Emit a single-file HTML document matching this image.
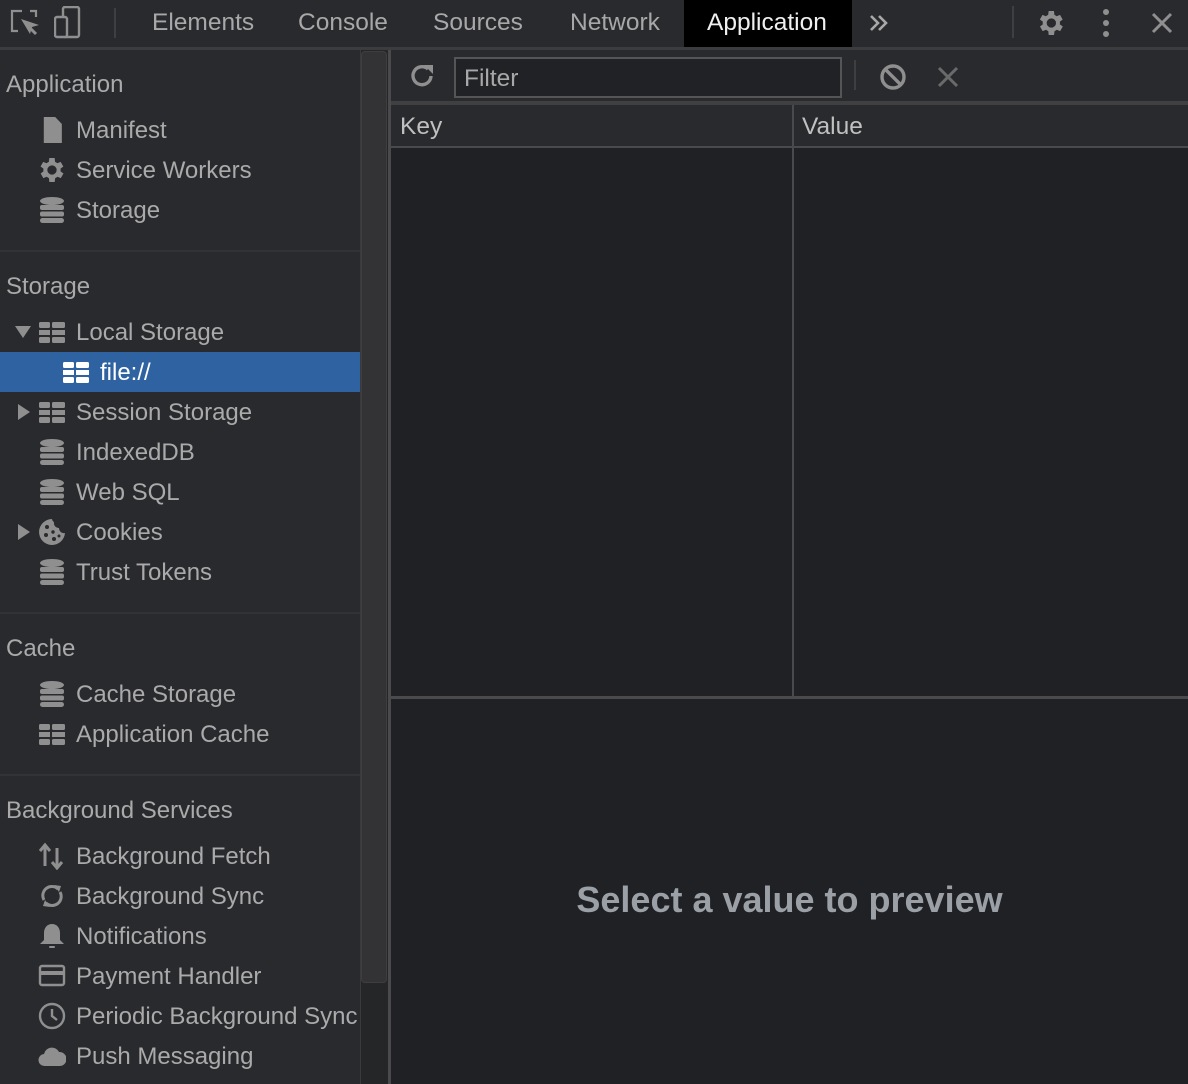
<!DOCTYPE html>
<html><head><meta charset="utf-8"><style>
*{margin:0;padding:0;box-sizing:border-box}
body{width:1188px;height:1084px;background:#292a2d;font-family:"Liberation Sans",Arial,sans-serif;color:#b1b1b1;position:relative;overflow:hidden}
.a{position:absolute}
.t{font-size:24.5px;white-space:nowrap}
.row{position:absolute;left:0;width:360px;height:40px;line-height:42px;font-size:24px;color:#aaa;white-space:nowrap;overflow:hidden}
.row .lbl{position:absolute;left:76px}
.row svg{position:absolute;left:38px;top:6px}
.hd{position:absolute;left:6px;font-size:24px;color:#aaa;line-height:42px;height:40px}
.sep{position:absolute;left:0;width:360px;height:2px;background:#323336}
</style></head><body>
<div class="a" style="left:0;top:0;width:1188px;height:47px;background:#292a2d"></div>
<div class="a" style="left:0;top:47px;width:1188px;height:3px;background:#3c3c3e"></div>
<svg class="a" style="left:8px;top:6px" width="34" height="34" viewBox="0 0 34 34"><path d="M14 5H4v20h6" fill="none" stroke="#8f8f8f" stroke-width="2.2"/><path d="M22 5h6v6" fill="none" stroke="#8f8f8f" stroke-width="2.2"/><path d="M13 13l18 6-7 2-2 7z" fill="#8f8f8f"/><path d="M22 22l6 6" stroke="#8f8f8f" stroke-width="3"/></svg>
<svg class="a" style="left:54px;top:6px" width="40" height="34" viewBox="0 0 40 34"><rect x="9" y="1" width="16" height="30" rx="2" fill="none" stroke="#8f8f8f" stroke-width="2.4"/><rect x="1" y="11" width="12" height="20" rx="2" fill="#292a2d" stroke="#8f8f8f" stroke-width="2.4"/></svg>
<div class="a" style="left:114px;top:8px;width:2px;height:30px;background:#3f3f42"></div>
<div class="a t" style="left:152px;top:9px;color:#a8a8a8">Elements</div>
<div class="a t" style="left:298px;top:9px;color:#a8a8a8">Console</div>
<div class="a t" style="left:433px;top:9px;color:#a8a8a8">Sources</div>
<div class="a t" style="left:570px;top:9px;color:#a8a8a8">Network</div>
<div class="a" style="left:684px;top:0;width:168px;height:47px;background:#000"></div>
<div class="a t" style="left:707px;top:9px;color:#f0f0f0">Application</div>
<svg class="a" style="left:869px;top:13px" width="20" height="20"><path d="M2 3l7 7-7 7M10 3l7 7-7 7" fill="none" stroke="#a8a8a8" stroke-width="2.6"/></svg>
<div class="a" style="left:1012px;top:6px;width:2px;height:32px;background:#3f3f42"></div>
<svg class="a" style="left:1034px;top:7px" width="32" height="32" viewBox="0 0 24 24"><path fill="#8f8f8f" d="M19.4 13a7.5 7.5 0 000-2l2.1-1.6-2-3.5-2.5 1a7 7 0 00-1.7-1L15 3h-4l-.4 2.9a7 7 0 00-1.7 1l-2.5-1-2 3.5L6.6 11a7.5 7.5 0 000 2l-2.1 1.6 2 3.5 2.5-1a7 7 0 001.7 1L11 21h4l.4-2.9a7 7 0 001.7-1l2.5 1 2-3.5zM13 15.5a3.5 3.5 0 110-7 3.5 3.5 0 010 7z"/></svg>
<svg class="a" style="left:1098px;top:8px" width="16" height="30"><circle cx="8" cy="4" r="3" fill="#8f8f8f"/><circle cx="8" cy="15" r="3" fill="#8f8f8f"/><circle cx="8" cy="26" r="3" fill="#8f8f8f"/></svg>
<svg class="a" style="left:1150px;top:11px" width="24" height="24"><path d="M3 3l18 18M21 3L3 21" stroke="#8f8f8f" stroke-width="3"/></svg>

<div class="hd" style="top:64px">Application</div>
<div class="row" style="top:110px"><svg width="28" height="28" viewBox="0 0 28 28"><path d="M4 1h12l7 7v19H4z" fill="#8f8f8f" transform="translate(2 0) scale(0.95 1)"/></svg><span class="lbl">Manifest</span></div>
<div class="row" style="top:150px"><svg style="left:36px;top:4px" width="32" height="32" viewBox="0 0 24 24"><path fill="#8f8f8f" d="M19.4 13a7.5 7.5 0 000-2l2.1-1.6-2-3.5-2.5 1a7 7 0 00-1.7-1L15 3h-4l-.4 2.9a7 7 0 00-1.7 1l-2.5-1-2 3.5L6.6 11a7.5 7.5 0 000 2l-2.1 1.6 2 3.5 2.5-1a7 7 0 001.7 1L11 21h4l.4-2.9a7 7 0 001.7-1l2.5 1 2-3.5zM13 15.5a3.5 3.5 0 110-7 3.5 3.5 0 010 7z" transform="translate(-1 0)"/></svg><span class="lbl">Service Workers</span></div>
<div class="row" style="top:190px"><svg width="28" height="28" viewBox="0 0 28 28"><g fill="#8f8f8f"><ellipse cx="14" cy="5" rx="12" ry="4"/><rect x="2" y="9" width="24" height="5" rx="2"/><rect x="2" y="15.5" width="24" height="5" rx="2"/><rect x="2" y="22" width="24" height="5" rx="2.5"/></g></svg><span class="lbl">Storage</span></div>
<div class="sep" style="top:250px"></div>
<div class="hd" style="top:266px">Storage</div>
<svg class="a" style="left:15px;top:326px" width="16" height="12"><path d="M0 0h16L8 12z" fill="#8f8f8f"/></svg>
<div class="row" style="top:312px"><svg width="28" height="28" viewBox="0 0 28 28"><g fill="#8f8f8f"><rect x="1" y="4" width="11" height="6" rx="1.5"/><rect x="14" y="4" width="13" height="6" rx="1.5"/><rect x="1" y="12" width="11" height="5"/><rect x="14" y="12" width="13" height="5"/><rect x="1" y="19" width="11" height="6" rx="1.5"/><rect x="14" y="19" width="13" height="6" rx="1.5"/></g></svg><span class="lbl">Local Storage</span></div>
<div class="a" style="left:0;top:352px;width:360px;height:40px;background:#2e62a0"></div>
<div class="row" style="top:352px;color:#fff"><svg style="left:62px" width="28" height="28" viewBox="0 0 28 28"><g fill="#fff"><rect x="1" y="4" width="11" height="6" rx="1.5"/><rect x="14" y="4" width="13" height="6" rx="1.5"/><rect x="1" y="12" width="11" height="5"/><rect x="14" y="12" width="13" height="5"/><rect x="1" y="19" width="11" height="6" rx="1.5"/><rect x="14" y="19" width="13" height="6" rx="1.5"/></g></svg><span class="lbl" style="left:100px">file://</span></div>
<svg class="a" style="left:18px;top:404px" width="12" height="16"><path d="M0 0v16l12-8z" fill="#8f8f8f"/></svg>
<div class="row" style="top:392px"><svg width="28" height="28" viewBox="0 0 28 28"><g fill="#8f8f8f"><rect x="1" y="4" width="11" height="6" rx="1.5"/><rect x="14" y="4" width="13" height="6" rx="1.5"/><rect x="1" y="12" width="11" height="5"/><rect x="14" y="12" width="13" height="5"/><rect x="1" y="19" width="11" height="6" rx="1.5"/><rect x="14" y="19" width="13" height="6" rx="1.5"/></g></svg><span class="lbl">Session Storage</span></div>
<div class="row" style="top:432px"><svg width="28" height="28" viewBox="0 0 28 28"><g fill="#8f8f8f"><ellipse cx="14" cy="5" rx="12" ry="4"/><rect x="2" y="9" width="24" height="5" rx="2"/><rect x="2" y="15.5" width="24" height="5" rx="2"/><rect x="2" y="22" width="24" height="5" rx="2.5"/></g></svg><span class="lbl">IndexedDB</span></div>
<div class="row" style="top:472px"><svg width="28" height="28" viewBox="0 0 28 28"><g fill="#8f8f8f"><ellipse cx="14" cy="5" rx="12" ry="4"/><rect x="2" y="9" width="24" height="5" rx="2"/><rect x="2" y="15.5" width="24" height="5" rx="2"/><rect x="2" y="22" width="24" height="5" rx="2.5"/></g></svg><span class="lbl">Web SQL</span></div>
<svg class="a" style="left:18px;top:524px" width="12" height="16"><path d="M0 0v16l12-8z" fill="#8f8f8f"/></svg>
<div class="row" style="top:512px"><svg width="28" height="28" viewBox="0 0 28 28"><path d="M14 1A13 13 0 1027 15a5 5 0 01-6-5 5 5 0 01-5-6 4 4 0 01-2-3z" fill="#8f8f8f"/><g fill="#292a2d"><circle cx="9" cy="9" r="2"/><circle cx="8" cy="17" r="2"/><circle cx="15" cy="14" r="1.7"/><circle cx="16" cy="21" r="2"/><circle cx="21" cy="18" r="1.5"/></g></svg><span class="lbl">Cookies</span></div>
<div class="row" style="top:552px"><svg width="28" height="28" viewBox="0 0 28 28"><g fill="#8f8f8f"><ellipse cx="14" cy="5" rx="12" ry="4"/><rect x="2" y="9" width="24" height="5" rx="2"/><rect x="2" y="15.5" width="24" height="5" rx="2"/><rect x="2" y="22" width="24" height="5" rx="2.5"/></g></svg><span class="lbl">Trust Tokens</span></div>
<div class="sep" style="top:612px"></div>
<div class="hd" style="top:628px">Cache</div>
<div class="row" style="top:674px"><svg width="28" height="28" viewBox="0 0 28 28"><g fill="#8f8f8f"><ellipse cx="14" cy="5" rx="12" ry="4"/><rect x="2" y="9" width="24" height="5" rx="2"/><rect x="2" y="15.5" width="24" height="5" rx="2"/><rect x="2" y="22" width="24" height="5" rx="2.5"/></g></svg><span class="lbl">Cache Storage</span></div>
<div class="row" style="top:714px"><svg width="28" height="28" viewBox="0 0 28 28"><g fill="#8f8f8f"><rect x="1" y="4" width="11" height="6" rx="1.5"/><rect x="14" y="4" width="13" height="6" rx="1.5"/><rect x="1" y="12" width="11" height="5"/><rect x="14" y="12" width="13" height="5"/><rect x="1" y="19" width="11" height="6" rx="1.5"/><rect x="14" y="19" width="13" height="6" rx="1.5"/></g></svg><span class="lbl">Application Cache</span></div>
<div class="sep" style="top:774px"></div>
<div class="hd" style="top:790px">Background Services</div>
<div class="row" style="top:836px"><svg width="28" height="28" viewBox="0 0 28 28"><g stroke="#8f8f8f" stroke-width="3" fill="none"><path d="M7 24V4M2 9l5-6 5 6"/><path d="M19 6v20M14 20l5 6 5-6"/></g></svg><span class="lbl">Background Fetch</span></div>
<div class="row" style="top:876px"><svg width="28" height="28" viewBox="0 0 28 28"><g stroke="#8f8f8f" stroke-width="3" fill="none"><path d="M6 18a9 9 0 0114-11"/><path d="M22 10a9 9 0 01-14 11"/></g><path d="M16 3l7 1-2 6z M12 25l-7-1 2-6z" fill="#8f8f8f"/></svg><span class="lbl">Background Sync</span></div>
<div class="row" style="top:916px"><svg width="28" height="28" viewBox="0 0 28 28"><path d="M14 2c-5 0-8 4-8 9v7l-4 4h24l-4-4v-7c0-5-3-9-8-9z" fill="#8f8f8f"/><rect x="11" y="24" width="6" height="2" rx="1" fill="#8f8f8f"/></svg><span class="lbl">Notifications</span></div>
<div class="row" style="top:956px"><svg width="28" height="28" viewBox="0 0 28 28"><rect x="2" y="4" width="24" height="19" rx="2" fill="none" stroke="#8f8f8f" stroke-width="2.4"/><rect x="2" y="9" width="24" height="4" fill="#8f8f8f"/></svg><span class="lbl">Payment Handler</span></div>
<div class="row" style="top:996px"><svg width="28" height="28" viewBox="0 0 28 28"><circle cx="14" cy="14" r="12" fill="none" stroke="#8f8f8f" stroke-width="2.4"/><path d="M14 7v7l5 4" stroke="#8f8f8f" stroke-width="2.4" fill="none"/></svg><span class="lbl">Periodic Background Sync</span></div>
<div class="row" style="top:1036px"><svg width="28" height="28" viewBox="0 0 28 28"><path d="M7 24a6 6 0 01-1-12 8 8 0 0115-2 6 6 0 011 14z" fill="#8f8f8f"/></svg><span class="lbl">Push Messaging</span></div>

<div class="a" style="left:360px;top:50px;width:28px;height:1034px;background:#252628;border-left:1px solid #3a3a3c"></div>
<div class="a" style="left:361px;top:51px;width:26px;height:932px;background:#333335;border-radius:4px;border:1px solid #3e3e40"></div>
<div class="a" style="left:388px;top:50px;width:3px;height:1034px;background:#4a4a4c"></div>

<svg class="a" style="left:408px;top:62px" width="28" height="28" viewBox="0 0 28 28"><path d="M23 14a9 9 0 11-3-7" fill="none" stroke="#8f8f8f" stroke-width="3.4"/><path d="M16 3h9v9z" fill="#8f8f8f"/></svg>
<div class="a" style="left:454px;top:57px;width:388px;height:41px;background:#212225;border:2px solid #555"></div>
<div class="a t" style="left:464px;top:65px;color:#a8a8a8">Filter</div>
<div class="a" style="left:854px;top:60px;width:2px;height:30px;background:#3f3f42"></div>
<svg class="a" style="left:878px;top:62px" width="30" height="30" viewBox="0 0 30 30"><circle cx="15" cy="15" r="11" fill="none" stroke="#8f8f8f" stroke-width="3.4"/><path d="M7 7l16 16" stroke="#8f8f8f" stroke-width="3.4"/></svg>
<svg class="a" style="left:937px;top:66px" width="22" height="22"><path d="M2 2l18 18M20 2L2 20" stroke="#6a6a6a" stroke-width="3"/></svg>
<div class="a" style="left:391px;top:101px;width:797px;height:4px;background:#404042"></div>

<div class="a" style="left:391px;top:105px;width:797px;height:41px;background:#292a2d"></div>
<div class="a t" style="left:400px;top:113px;color:#c0c0c0">Key</div>
<div class="a t" style="left:802px;top:113px;color:#c0c0c0">Value</div>
<div class="a" style="left:391px;top:146px;width:797px;height:2px;background:#4a4a4c"></div>
<div class="a" style="left:391px;top:148px;width:797px;height:548px;background:#202124"></div>
<div class="a" style="left:792px;top:105px;width:2px;height:591px;background:#4a4a4c"></div>
<div class="a" style="left:391px;top:696px;width:797px;height:3px;background:#4a4a4c"></div>
<div class="a" style="left:391px;top:699px;width:797px;height:385px;background:#202124"></div>
<div class="a" style="left:391px;top:879px;width:797px;text-align:center;font-size:36px;font-weight:bold;color:#9aa0a6">Select a value to preview</div>
</body></html>
